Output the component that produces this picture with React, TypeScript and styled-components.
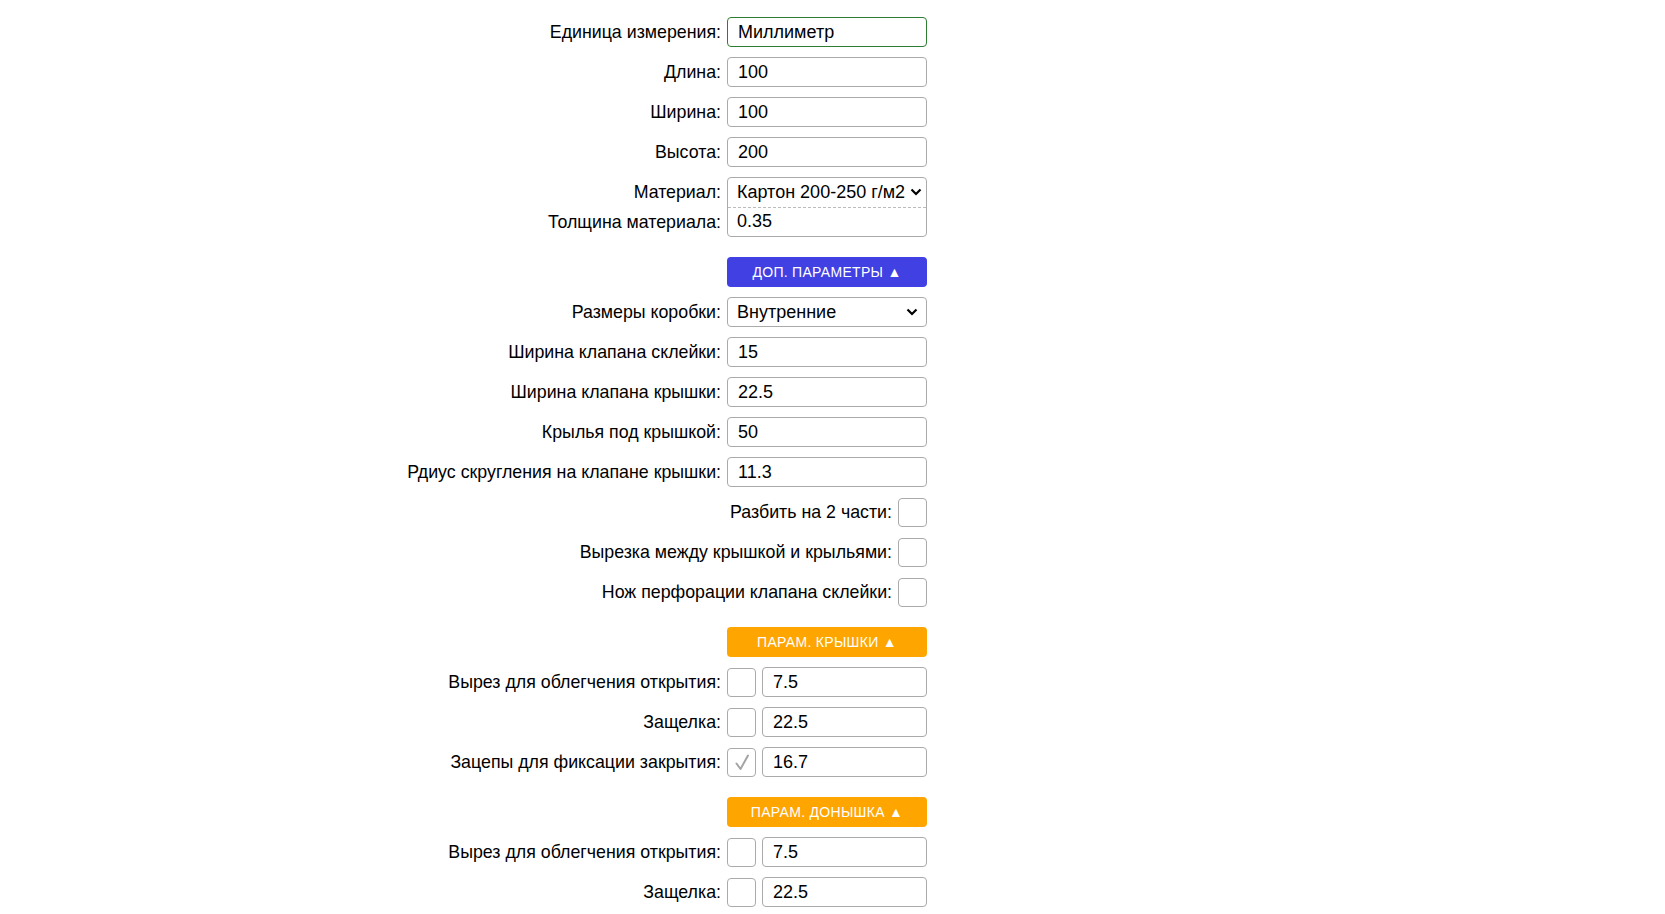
import React from "react"
import styled, { createGlobalStyle } from "styled-components"

const GlobalStyle = createGlobalStyle`
  body {
    margin: 0;
    background: #fff;
    font-family: "Liberation Sans", Arial, sans-serif;
    color: #000;
  }
`

const Form = styled.div`
  width: 927px;
  padding-top: 17px;
  display: flex;
  flex-direction: column;
  align-items: flex-end;
  gap: 10px;
`

const Row = styled.div`
  display: flex;
  justify-content: flex-end;
  align-items: center;
  gap: 6px;
  min-height: 30px;
`

const Label = styled.label`
  font-size: 17.8px;
  line-height: 30px;
  text-align: right;
  white-space: nowrap;
`

const LabelStack = styled.div`
  display: flex;
  flex-direction: column;
  align-items: flex-end;
`

const Field = styled.div<{ $w?: number; $focus?: boolean }>`
  box-sizing: border-box;
  width: ${(p) => p.$w || 200}px;
  height: 30px;
  border: 1px solid ${(p) => (p.$focus ? "#2e7d32" : "#aaa")};
  border-radius: 4px;
  padding: 0 10px;
  font-size: 18px;
  line-height: 28px;
  white-space: nowrap;
`

const Group = styled.div`
  box-sizing: border-box;
  width: 200px;
  height: 60px;
  border: 1px solid #aaa;
  border-radius: 4px;
  display: flex;
  flex-direction: column;
`

const GroupPart = styled.div<{ $dashed?: boolean }>`
  flex: 1;
  padding: 0 4px 0 9px;
  display: flex;
  align-items: center;
  justify-content: space-between;
  font-size: 18px;
  white-space: nowrap;
  border-bottom: ${(p) => (p.$dashed ? "1px dashed #bbb" : "none")};
`

const Select = styled(Field)`
  display: flex;
  align-items: center;
  justify-content: space-between;
  padding: 0 8px 0 9px;
`

const Box = styled.div`
  box-sizing: border-box;
  width: 29px;
  height: 29px;
  border: 1px solid #aaa;
  border-radius: 4px;
  display: flex;
  align-items: center;
  justify-content: center;
`

const Toggle = styled.div<{ $color: string }>`
  box-sizing: border-box;
  width: 200px;
  height: 30px;
  margin-top: 10px;
  border-radius: 4px;
  background: ${(p) => p.$color};
  color: #fff;
  font-size: 14px;
  display: flex;
  align-items: center;
  justify-content: center;
  letter-spacing: 0.3px;
`

const Chevron = () => (
  <svg width="12" height="8" viewBox="0 0 12 8">
    <path d="M1.5 1.5 L6 6 L10.5 1.5" fill="none" stroke="#000" strokeWidth="2.2" />
  </svg>
)

const Check = () => (
  <svg width="18" height="19" viewBox="0 0 18 19">
    <path d="M3.5 10.5 L7.5 16 L15 2.5" fill="none" stroke="#a4a4a4" strokeWidth="2" strokeLinecap="round" strokeLinejoin="round" />
  </svg>
)

const InputRow = ({ label, value, focus }: { label: string; value: string; focus?: boolean }) => (
  <Row>
    <Label>{label}</Label>
    <Field $focus={focus}>{value}</Field>
  </Row>
)

const CheckRow = ({ label }: { label: string }) => (
  <Row>
    <Label>{label}</Label>
    <Box />
  </Row>
)

const ComboRow = ({ label, value, checked }: { label: string; value: string; checked?: boolean }) => (
  <Row>
    <Label>{label}</Label>
    <Box>{checked && <Check />}</Box>
    <Field $w={165}>{value}</Field>
  </Row>
)

export default function App() {
  return (
    <>
      <GlobalStyle />
      <Form>
        <InputRow label="Единица измерения:" value="Миллиметр" focus />
        <InputRow label="Длина:" value="100" />
        <InputRow label="Ширина:" value="100" />
        <InputRow label="Высота:" value="200" />
        <Row>
          <LabelStack>
            <Label>Материал:</Label>
            <Label>Толщина материала:</Label>
          </LabelStack>
          <Group>
            <GroupPart $dashed>
              <span>Картон 200-250 г/м2</span>
              <Chevron />
            </GroupPart>
            <GroupPart>0.35</GroupPart>
          </Group>
        </Row>

        <Toggle $color="#4040e3">ДОП. ПАРАМЕТРЫ ▲</Toggle>
        <Row>
          <Label>Размеры коробки:</Label>
          <Select>
            <span>Внутренние</span>
            <Chevron />
          </Select>
        </Row>
        <InputRow label="Ширина клапана склейки:" value="15" />
        <InputRow label="Ширина клапана крышки:" value="22.5" />
        <InputRow label="Крылья под крышкой:" value="50" />
        <InputRow label="Рдиус скругления на клапане крышки:" value="11.3" />
        <CheckRow label="Разбить на 2 части:" />
        <CheckRow label="Вырезка между крышкой и крыльями:" />
        <CheckRow label="Нож перфорации клапана склейки:" />

        <Toggle $color="#ffa500">ПАРАМ. КРЫШКИ ▲</Toggle>
        <ComboRow label="Вырез для облегчения открытия:" value="7.5" />
        <ComboRow label="Защелка:" value="22.5" />
        <ComboRow label="Зацепы для фиксации закрытия:" value="16.7" checked />

        <Toggle $color="#ffa500">ПАРАМ. ДОНЫШКА ▲</Toggle>
        <ComboRow label="Вырез для облегчения открытия:" value="7.5" />
        <ComboRow label="Защелка:" value="22.5" />
      </Form>
    </>
  )
}
